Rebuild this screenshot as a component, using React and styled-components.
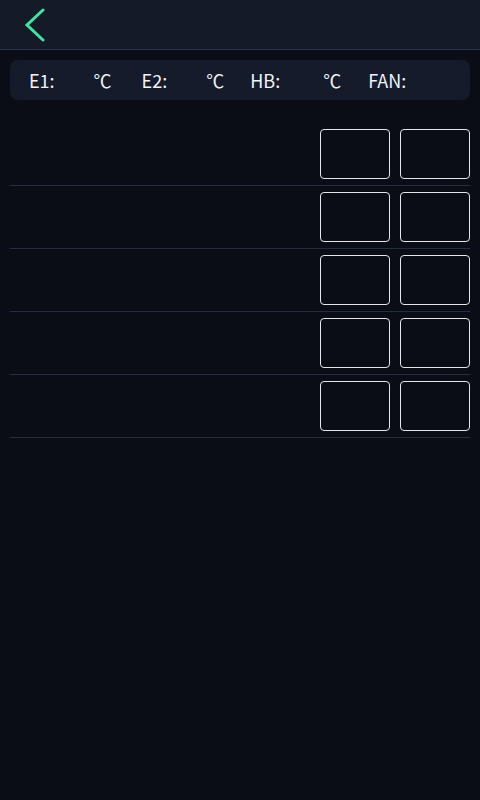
import React from 'react';
import styled, { createGlobalStyle } from 'styled-components';

const GlobalStyle = createGlobalStyle`
  html, body {
    margin: 0;
    padding: 0;
    background: #0a0d16;
  }
  body {
    font-family: "Noto Sans CJK SC", "Noto Sans", sans-serif;
    color: #f2f3f6;
  }
`;

const Page = styled.div`
  width: 480px;
  height: 800px;
  background: #0a0d16;
  display: flex;
  flex-direction: column;
`;

const Header = styled.div`
  height: 49px;
  background: #151a29;
  border-bottom: 1px solid #2b3352;
  display: flex;
  align-items: center;
  padding-left: 24px;
`;

const BackButton = styled.button`
  background: none;
  border: none;
  padding: 0;
  width: 24px;
  height: 34px;
  display: flex;
  align-items: center;
  cursor: pointer;
`;

const StatusBar = styled.div`
  margin: 10px 10px 0;
  height: 40px;
  background: #161b2b;
  border-radius: 8px;
  display: flex;
  align-items: center;
  padding-left: 19px;
  font-size: 18px;
`;

const Group = styled.div`
  display: flex;
  align-items: center;
  margin-right: ${p => p.$after || 0}px;
`;

const Label = styled.span`
  line-height: 1;
`;

const Value = styled.span`
  display: inline-block;
  width: ${p => p.$w}px;
`;

const List = styled.div`
  margin: 23px 10px 0;
  display: flex;
  flex-direction: column;
`;

const Row = styled.div`
  height: 62px;
  border-bottom: 1px solid #262c45;
  display: flex;
  justify-content: flex-end;
  align-items: center;
  gap: 10px;
`;

const Cell = styled.div`
  width: 68px;
  height: 48px;
  border: 1px solid #e4e6ea;
  border-radius: 4px;
`;

const groups = [
  { label: 'E1:', unit: '℃', w: 39, after: 30 },
  { label: 'E2:', unit: '℃', w: 39, after: 26 },
  { label: 'HB:', unit: '℃', w: 43, after: 27 },
  { label: 'FAN:', unit: '', w: 0, after: 0 },
];

export default function App() {
  return (
    <Page>
      <GlobalStyle />
      <Header>
        <BackButton aria-label="back">
          <svg width="24" height="34" viewBox="0 0 24 34">
            <polyline points="19,2 3,17 19,32" fill="none" stroke="#3de69c" strokeWidth="3" strokeLinecap="round" strokeLinejoin="miter" />
          </svg>
        </BackButton>
      </Header>
      <StatusBar>
        {groups.map(g => (
          <Group key={g.label} $after={g.after}>
            <Label>{g.label}</Label>
            <Value $w={g.w} />
            {g.unit && <Label>{g.unit}</Label>}
          </Group>
        ))}
      </StatusBar>
      <List>
        {[0, 1, 2, 3, 4].map(i => (
          <Row key={i}>
            <Cell />
            <Cell />
          </Row>
        ))}
      </List>
    </Page>
  );
}
